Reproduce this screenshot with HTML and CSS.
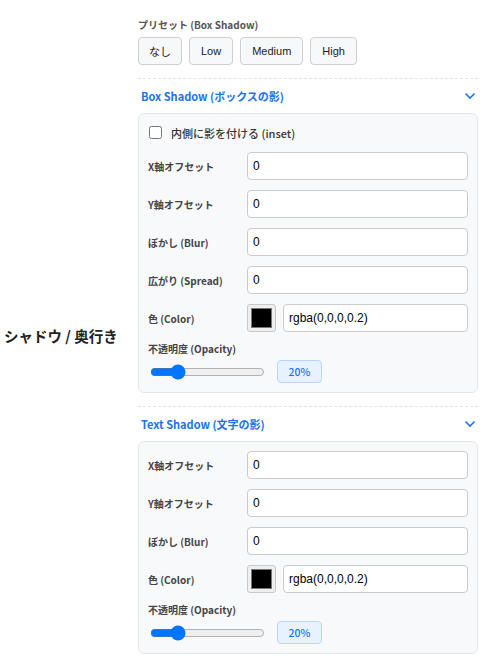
FILE: index.html
```html
<!DOCTYPE html>
<html lang="ja">
<head>
<meta charset="utf-8">
<title>Shadow</title>
<link rel="stylesheet" href="styles.css">
</head>
<body>
<div class="setting-row">
  <div class="row-label">シャドウ / 奥行き</div>
  <div class="row-body">
    <div class="preset">
      <div class="caption">プリセット (Box Shadow)</div>
      <div class="btns">
        <button class="btn btn-ja">なし</button>
        <button class="btn">Low</button>
        <button class="btn">Medium</button>
        <button class="btn">High</button>
      </div>
    </div>

    <section class="group">
      <div class="group-head">
        <span>Box Shadow (ボックスの影)</span>
        <svg class="chev" width="12" height="8" viewBox="0 0 12 8"><polyline points="1.5,1.5 6,6 10.5,1.5" fill="none" stroke="#1a73e8" stroke-width="1.6"/></svg>
      </div>
      <div class="panel">
        <label class="check"><input type="checkbox"><span>内側に影を付ける (inset)</span></label>
        <div class="field"><span class="flabel">X軸オフセット</span><input class="text" type="text" value="0"></div>
        <div class="field"><span class="flabel">Y軸オフセット</span><input class="text" type="text" value="0"></div>
        <div class="field"><span class="flabel">ぼかし (Blur)</span><input class="text" type="text" value="0"></div>
        <div class="field"><span class="flabel">広がり (Spread)</span><input class="text" type="text" value="0"></div>
        <div class="field"><span class="flabel">色 (Color)</span>
          <div class="color"><span class="swatch"><i></i></span><input class="text" type="text" value="rgba(0,0,0,0.2)"></div>
        </div>
        <div class="opacity">
          <div class="flabel">不透明度 (Opacity)</div>
          <div class="slider-row"><input class="range" type="range" min="0" max="100" value="20"><span class="badge">20%</span></div>
        </div>
      </div>
    </section>

    <section class="group">
      <div class="group-head">
        <span>Text Shadow (文字の影)</span>
        <svg class="chev" width="12" height="8" viewBox="0 0 12 8"><polyline points="1.5,1.5 6,6 10.5,1.5" fill="none" stroke="#1a73e8" stroke-width="1.6"/></svg>
      </div>
      <div class="panel">
        <div class="field"><span class="flabel">X軸オフセット</span><input class="text" type="text" value="0"></div>
        <div class="field"><span class="flabel">Y軸オフセット</span><input class="text" type="text" value="0"></div>
        <div class="field"><span class="flabel">ぼかし (Blur)</span><input class="text" type="text" value="0"></div>
        <div class="field"><span class="flabel">色 (Color)</span>
          <div class="color"><span class="swatch"><i></i></span><input class="text" type="text" value="rgba(0,0,0,0.2)"></div>
        </div>
        <div class="opacity">
          <div class="flabel">不透明度 (Opacity)</div>
          <div class="slider-row"><input class="range" type="range" min="0" max="100" value="20"><span class="badge">20%</span></div>
        </div>
      </div>
    </section>
  </div>
</div>
</body>
</html>
```

FILE: styles.css
```css
html, body {
  margin: 0;
  padding: 0;
  background: #ffffff;
}
body {
  font-family: "Noto Sans CJK JP", "Noto Sans", sans-serif;
  color: #333;
}
.setting-row {
  display: grid;
  grid-template-columns: 138px 340px;
  align-items: center;
  padding: 17px 0 8px 0;
}
.row-label {
  padding-left: 4px;
  font-size: 14.5px;
  font-weight: 700;
  color: #222;
}
.row-body {
  display: flex;
  flex-direction: column;
}
.caption {
  font-size: 10px;
  line-height: 16px;
  font-weight: 600;
  color: #555;
  margin-bottom: 4px;
}
.btns {
  display: flex;
  gap: 7px;
}
.btn {
  height: 28px;
  padding: 0 11px;
  border: 1px solid #cfcfcf;
  border-radius: 4px;
  background: #f7f8f9;
  font-family: "Liberation Sans", "Noto Sans CJK JP", sans-serif;
  font-size: 11px;
  color: #222;
}
.btn-ja {
  padding: 0 10px;
}
.group {
  margin-top: 13px;
  border-top: 1px dashed #e2e2e2;
  padding-top: 7px;
}
.group-head {
  display: flex;
  align-items: center;
  justify-content: space-between;
  height: 20px;
  margin-bottom: 7px;
  padding-left: 3px;
  font-size: 11px;
  font-weight: 700;
  color: #1a73e8;
}
.chev {
  margin-right: 2px;
}
.panel {
  background: #f8f9fb;
  border: 1px solid #e4e6ea;
  border-radius: 6px;
  padding: 9px;
  display: flex;
  flex-direction: column;
  gap: 10px;
}
.check {
  display: flex;
  align-items: center;
  height: 19px;
  font-size: 11px;
  font-weight: 500;
  color: #333;
}
.check input {
  margin: 0 9px 0 1px;
  width: 13px;
  height: 13px;
}
.field {
  display: flex;
  align-items: center;
  height: 28px;
}
.flabel {
  font-size: 10px;
  font-weight: 600;
  color: #444;
}
.field .flabel {
  width: 99px;
  flex: none;
}
.text {
  flex: 1;
  min-width: 0;
  height: 28px;
  box-sizing: border-box;
  border: 1px solid #cbcbcb;
  border-radius: 4px;
  background: #fff;
  padding: 0 5px;
  font-family: "Liberation Sans", sans-serif;
  font-size: 12px;
  color: #000;
}
.color {
  flex: 1;
  display: flex;
  gap: 7px;
  min-width: 0;
}
.swatch {
  flex: none;
  width: 29px;
  height: 28px;
  box-sizing: border-box;
  border: 1px solid #c8c8c8;
  border-radius: 3px;
  background: #efefef;
  padding: 3px;
  display: flex;
}
.swatch i {
  flex: 1;
  background: #000;
  border: 1px solid #777;
}
.opacity .flabel {
  line-height: 14px;
  margin-bottom: 4px;
}
.slider-row {
  display: flex;
  align-items: center;
  gap: 10px;
  height: 23px;
}
.range {
  width: 115px;
  margin: 0 2px;
}
.badge {
  width: 45px;
  height: 23px;
  box-sizing: border-box;
  display: flex;
  align-items: center;
  justify-content: center;
  background: #e8f1fe;
  border: 1px solid #b9d5fb;
  border-radius: 4px;
  font-size: 10.5px;
  font-weight: 500;
  color: #1a73e8;
}
```
